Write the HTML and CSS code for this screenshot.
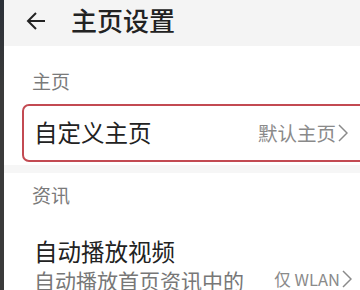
FILE: index.html
```html
<!DOCTYPE html>
<html lang="zh">
<head>
<meta charset="utf-8">
<link rel="stylesheet" href="styles.css">
</head>
<body>
<div class="frame">
  <div class="bezel"></div>
  <div class="screen">
    <header class="topbar">
      <svg class="back" width="22" height="22" viewBox="0 0 22 22"><path d="M20 11H3M11 3L3 11L11 19" fill="none" stroke="#222" stroke-width="2"/></svg>
      <h1 class="title">主页设置</h1>
    </header>
    <div class="section-label first">主页</div>
    <div class="row highlighted">
      <span class="row-title">自定义主页</span>
      <span class="row-value">默认主页<svg class="chev" width="10" height="18" viewBox="0 0 10 18"><path d="M1 1L9 9L1 17" fill="none" stroke="#8a8a8a" stroke-width="1.5"/></svg></span>
    </div>
    <div class="divider"></div>
    <div class="section-label second">资讯</div>
    <div class="row two-line">
      <div class="texts">
        <div class="row-title">自动播放视频</div>
        <div class="row-sub">自动播放首页资讯中的</div>
      </div>
      <span class="row-value small">仅 WLAN<svg class="chev" width="10" height="18" viewBox="0 0 10 18"><path d="M1 1L9 9L1 17" fill="none" stroke="#8a8a8a" stroke-width="1.5"/></svg></span>
    </div>
  </div>
</div>
</body>
</html>
```

FILE: styles.css
```css
html, body {
  margin: 0;
  padding: 0;
  background: #fff;
}
body {
  width: 360px;
  height: 290px;
  overflow: hidden;
  font-family: "Noto Sans CJK SC", "Noto Sans", sans-serif;
}
.frame {
  display: flex;
  height: 290px;
}
.bezel {
  width: 4px;
  flex: none;
  background: linear-gradient(#2b3038, #3a3a3a 30%, #3a3a3a);
}
.screen {
  flex: 1;
  min-width: 0;
  background: #fff;
}
.topbar {
  height: 46px;
  background: #f4f4f4;
  display: flex;
  align-items: center;
  padding-left: 21px;
}
.back {
  flex: none;
  margin-top: -4px;
}
.title {
  margin: -6px 0 0 24px;
  font-size: 26px;
  font-weight: 500;
  color: #222;
  line-height: 1;
}
.section-label {
  font-size: 19px;
  color: #7a7a7a;
  line-height: 1;
  padding: 0 0 0 28px;
}
.section-label.first {
  margin-top: 25px;
  margin-bottom: 14px;
}
.section-label.second {
  margin-top: 12px;
}
.row {
  display: flex;
  align-items: center;
  justify-content: space-between;
}
.highlighted {
  margin-left: 18px;
  margin-right: -10px;
  height: 54px;
  border: 2px solid #c34a52;
  border-radius: 7px;
  padding: 0 20px 0 10px;
}
.row-title {
  font-size: 23.5px;
  color: #222;
  line-height: 1.1;
}
.row-value {
  display: flex;
  align-items: center;
  font-size: 19.5px;
  color: #8a8a8a;
  line-height: 1;
}
.row-value .chev {
  margin-left: 2px;
}
.divider {
  height: 8px;
  background: #f6f6f6;
  margin-top: 3px;
}
.two-line {
  padding: 0 8px 0 30px;
  margin-top: 35px;
  align-items: flex-end;
}
.row-sub {
  margin-top: 3px;
  font-size: 21px;
  color: #777;
  line-height: 1.15;
}
.row-value.small {
  font-size: 16.5px;
  margin-bottom: 4px;
}
```
